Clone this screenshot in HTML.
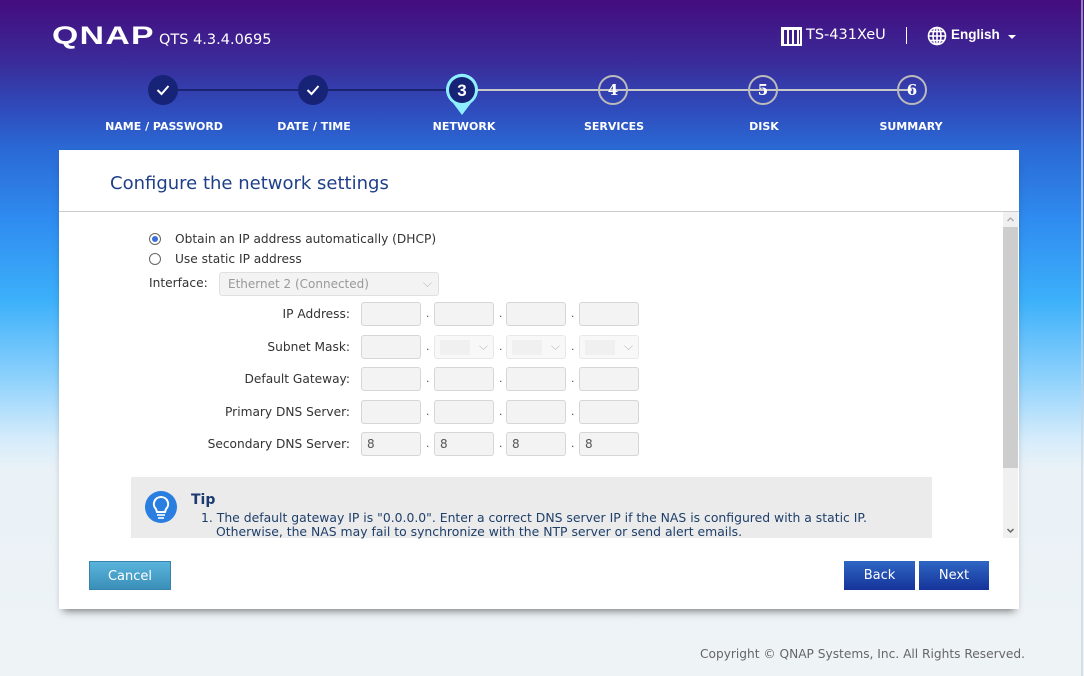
<!DOCTYPE html>
<html><head><meta charset="utf-8"><style>
*{margin:0;padding:0;box-sizing:border-box}
body{width:1084px;height:676px;overflow:hidden;position:relative;font-family:"Liberation Sans","DejaVu Sans",sans-serif;
background:linear-gradient(180deg,#440c7e 0px,#3b2a98 60px,#2f4cbc 110px,#2a6ad6 150px,#2f8cf0 220px,#3cb0fa 300px,#8fd2fc 380px,#d6ecfb 440px,#eaf2f7 470px,#eef3f6 676px)}
.abs{position:absolute}
.logo{left:52px;top:24px;color:#fff;font:900 25px "Liberation Sans",sans-serif;letter-spacing:1px;transform:scaleX(1.35);transform-origin:left;line-height:25px}
.ver{left:159px;top:32px;color:#fff;font-size:14.5px;font-family:"DejaVu Sans",sans-serif}
.step{position:absolute;top:75px;width:30px;height:30px;border-radius:50%;text-align:center;line-height:30px;font-weight:bold;color:#fff;font-size:15px}
.done{background:#162376}
.todo{border:2px solid #bbb;background:transparent;line-height:26px;font-family:"DejaVu Serif","Liberation Serif",serif;font-size:15px}
.lbl{position:absolute;top:120px;color:#fff;font-weight:bold;font-size:11px;font-family:"DejaVu Sans",sans-serif;transform:translateX(-50%);white-space:nowrap}
.line{position:absolute;top:89px;height:2px}
.card{left:59px;top:150px;width:960px;height:459px;background:#fff;box-shadow:0 6px 8px -4px rgba(0,0,0,.5)}
.title{left:110px;top:173px;color:#1f3f88;font-size:18px;font-family:"DejaVu Sans",sans-serif}
.t{font-family:"DejaVu Sans",sans-serif;font-size:12.2px;color:#333;position:absolute;white-space:nowrap}
.f{position:absolute;width:60px;height:24px;background:#f3f3f3;border:1px solid #d6d6d6;border-radius:3px;font-family:"DejaVu Sans",sans-serif;font-size:12px;color:#555;padding:4px 5px}
.dot{position:absolute;font-size:12px;color:#555}
.btn{position:absolute;top:561px;height:29px;color:#fff;font-size:13px;text-align:center;line-height:29px;font-family:"DejaVu Sans",sans-serif}
</style></head><body>
<div class="abs logo">QNAP</div>
<div class="abs ver">QTS 4.3.4.0695</div>
<svg class="abs" style="left:781px;top:27px" width="21" height="19"><rect x="0" y="0" width="21" height="3" fill="#fff"/><rect x="0" y="0" width="3" height="19" fill="#fff"/><rect x="6" y="3" width="2" height="16" fill="#fff"/><rect x="11" y="3" width="2" height="16" fill="#fff"/><rect x="16" y="3" width="2" height="16" fill="#fff"/><rect x="0" y="17" width="21" height="2" fill="#fff"/><rect x="19" y="0" width="2" height="19" fill="#fff"/></svg>
<div class="abs" style="left:806px;top:27px;color:#fff;font-size:14.5px;font-family:'DejaVu Sans',sans-serif">TS-431XeU</div>
<div class="abs" style="left:906px;top:27px;width:1px;height:17px;background:#fff"></div>
<svg class="abs" style="left:927px;top:26px" width="20" height="20" fill="none" stroke="#fff" stroke-width="1.6"><circle cx="10" cy="10" r="8.5"/><ellipse cx="10" cy="10" rx="4" ry="8.5"/><line x1="10" y1="1.5" x2="10" y2="18.5"/><line x1="1.5" y1="10" x2="18.5" y2="10"/><line x1="3" y1="5.5" x2="17" y2="5.5"/><line x1="3" y1="14.5" x2="17" y2="14.5"/></svg>
<div class="abs" style="left:951px;top:27px;color:#fff;font-size:13.5px;font-weight:bold">English</div>
<div class="abs" style="left:1008px;top:35px;width:0;height:0;border-left:4px solid transparent;border-right:4px solid transparent;border-top:4px solid #fff"></div>

<div class="line" style="left:164px;width:298px;background:#1a2370"></div>
<div class="line" style="left:462px;width:450px;background:#c8c8c8"></div>
<div class="step done" style="left:148px"><svg width="14" height="12" style="margin-top:9px"><path d="M1.5 6 L5.5 10 L12.5 2" fill="none" stroke="#fff" stroke-width="2"/></svg></div>
<div class="step done" style="left:298px"><svg width="14" height="12" style="margin-top:9px"><path d="M1.5 6 L5.5 10 L12.5 2" fill="none" stroke="#fff" stroke-width="2"/></svg></div>
<svg class="abs" style="left:444px;top:71px" width="36" height="46"><path d="M18 44 L9 32 A16 16 0 1 1 27 32 Z" fill="#8ef0ff"/><circle cx="18" cy="19" r="13" fill="#162376"/><text x="18" y="25" text-anchor="middle" fill="#fff" font-size="17" font-weight="bold" font-family="Liberation Sans">3</text></svg>
<div class="step todo" style="left:598px">4</div>
<div class="step todo" style="left:748px">5</div>
<div class="step todo" style="left:897px">6</div>
<div class="lbl" style="left:164px">NAME / PASSWORD</div>
<div class="lbl" style="left:314px">DATE / TIME</div>
<div class="lbl" style="left:464px">NETWORK</div>
<div class="lbl" style="left:614px">SERVICES</div>
<div class="lbl" style="left:764px">DISK</div>
<div class="lbl" style="left:911px">SUMMARY</div>

<div class="abs card"></div>
<div class="abs title">Configure the network settings</div>
<div class="abs" style="left:59px;top:211px;width:960px;height:1px;background:#ccc"></div>
<div class="abs" style="left:1003px;top:212px;width:15px;height:326px;background:#f0f0f0"></div>
<div class="abs" style="left:1003px;top:227px;width:15px;height:241px;background:#cdcdcd"></div>
<svg class="abs" style="left:1006px;top:215px" width="9" height="8"><path d="M1.5 6 L4.5 3 L7.5 6" fill="none" stroke="#aaa" stroke-width="1.3"/></svg>
<svg class="abs" style="left:1006px;top:527px" width="9" height="8"><path d="M1.5 2 L4.5 5 L7.5 2" fill="none" stroke="#666" stroke-width="1.5"/></svg>

<div class="abs" style="left:149px;top:233px;width:12px;height:12px;border:1px solid #666;border-radius:50%"><div style="margin:2px;width:6px;height:6px;border-radius:50%;background:#3b6fd8"></div></div>
<div class="t" style="left:175px;top:232px">Obtain an IP address automatically (DHCP)</div>
<div class="abs" style="left:149px;top:253px;width:12px;height:12px;border:1px solid #666;border-radius:50%"></div>
<div class="t" style="left:175px;top:252px">Use static IP address</div>
<div class="t" style="left:149px;top:276px">Interface:</div>
<div class="abs" style="left:219px;top:272px;width:220px;height:24px;background:#f3f3f3;border:1px solid #e0e0e0;border-radius:3px;font-family:'DejaVu Sans',sans-serif;font-size:12px;color:#999;padding:4px 8px">Ethernet 2 (Connected)<span style="position:absolute;right:6px;top:3px;color:#bbb">⌵</span></div>

<div class="t" style="right:734px;top:307px">IP Address:</div>
<div class="t" style="right:734px;top:340px">Subnet Mask:</div>
<div class="t" style="right:734px;top:372px">Default Gateway:</div>
<div class="t" style="right:734px;top:405px">Primary DNS Server:</div>
<div class="t" style="right:734px;top:437px">Secondary DNS Server:</div>

<div class="f" style="left:361px;top:302px"></div><div class="f" style="left:434px;top:302px"></div><div class="f" style="left:506px;top:302px"></div><div class="f" style="left:579px;top:302px"></div>
<div class="f" style="left:361px;top:335px"></div><div class="f" style="left:434px;top:335px;background:#f8f8f8;border-color:#e8e8e8;color:#bbb"><span style="position:absolute;left:5px;top:4px;width:30px;height:15px;background:#f0f0f0"></span><span style="position:absolute;right:5px;top:3px">⌵</span></div><div class="f" style="left:506px;top:335px;background:#f8f8f8;border-color:#e8e8e8;color:#bbb"><span style="position:absolute;left:5px;top:4px;width:30px;height:15px;background:#f0f0f0"></span><span style="position:absolute;right:5px;top:3px">⌵</span></div><div class="f" style="left:579px;top:335px;background:#f8f8f8;border-color:#e8e8e8;color:#bbb"><span style="position:absolute;left:5px;top:4px;width:30px;height:15px;background:#f0f0f0"></span><span style="position:absolute;right:5px;top:3px">⌵</span></div>
<div class="f" style="left:361px;top:367px"></div><div class="f" style="left:434px;top:367px"></div><div class="f" style="left:506px;top:367px"></div><div class="f" style="left:579px;top:367px"></div>
<div class="f" style="left:361px;top:400px"></div><div class="f" style="left:434px;top:400px"></div><div class="f" style="left:506px;top:400px"></div><div class="f" style="left:579px;top:400px"></div>
<div class="f" style="left:361px;top:432px">8</div><div class="f" style="left:434px;top:432px">8</div><div class="f" style="left:506px;top:432px">8</div><div class="f" style="left:579px;top:432px">8</div>
<div class="dot" style="left:426px;top:306px">.</div><div class="dot" style="left:499px;top:306px">.</div><div class="dot" style="left:571px;top:306px">.</div>
<div class="dot" style="left:426px;top:339px">.</div><div class="dot" style="left:499px;top:339px">.</div><div class="dot" style="left:571px;top:339px">.</div>
<div class="dot" style="left:426px;top:371px">.</div><div class="dot" style="left:499px;top:371px">.</div><div class="dot" style="left:571px;top:371px">.</div>
<div class="dot" style="left:426px;top:404px">.</div><div class="dot" style="left:499px;top:404px">.</div><div class="dot" style="left:571px;top:404px">.</div>
<div class="dot" style="left:426px;top:436px">.</div><div class="dot" style="left:499px;top:436px">.</div><div class="dot" style="left:571px;top:436px">.</div>

<div class="abs" style="left:131px;top:477px;width:801px;height:61px;background:#ebebeb"></div>
<svg class="abs" style="left:145px;top:491px" width="32" height="32"><circle cx="16" cy="16" r="16" fill="#2a7ee0"/><path d="M16 6 A7 7 0 0 0 11 18 L12 21 H20 L21 18 A7 7 0 0 0 16 6 Z" fill="none" stroke="#fff" stroke-width="2"/><line x1="12" y1="24" x2="20" y2="24" stroke="#fff" stroke-width="1.6"/><line x1="13" y1="27" x2="19" y2="27" stroke="#fff" stroke-width="1.6"/></svg>
<div class="abs" style="left:191px;top:492px;font-weight:bold;font-size:14px;color:#1a3a70;font-family:'DejaVu Sans',sans-serif">Tip</div>
<div class="t" style="left:201px;top:510px;color:#1f3f6a;font-size:12.4px">1. The default gateway IP is "0.0.0.0". Enter a correct DNS server IP if the NAS is configured with a static IP.</div>
<div class="t" style="left:216px;top:524px;color:#1f3f6a;font-size:12.4px">Otherwise, the NAS may fail to synchronize with the NTP server or send alert emails.</div>

<div class="btn" style="left:89px;width:82px;background:linear-gradient(#5ab4dc,#3a8fb8);border:1px solid #3684ad">Cancel</div>
<div class="btn" style="left:844px;width:71px;background:linear-gradient(#2e66c4,#16339a)">Back</div>
<div class="btn" style="left:919px;width:70px;background:linear-gradient(#2e66c4,#16339a)">Next</div>
<div class="abs" style="left:700px;top:647px;font-size:12.2px;color:#666;font-family:'DejaVu Sans',sans-serif">Copyright © QNAP Systems, Inc. All Rights Reserved.</div>
<div class="abs" style="left:1081px;top:0;width:2px;height:676px;background:rgba(200,210,220,.6)"></div>
</body></html>
